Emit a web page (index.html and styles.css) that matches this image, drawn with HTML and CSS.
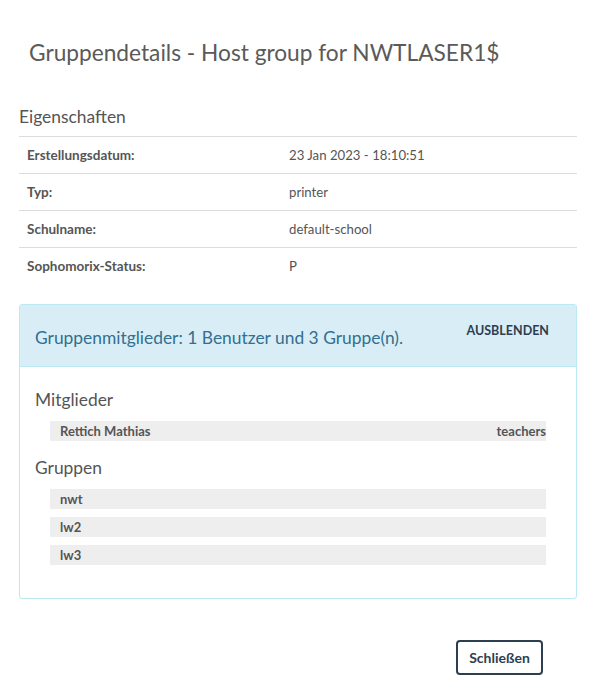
FILE: index.html
```html
<!doctype html>
<html>
<head>
<meta charset="utf-8">
<title>Gruppendetails</title>
<link rel="stylesheet" href="styles.css">
</head>
<body>
<div class="modal">
	<div class="modal-header">
		<h3 class="modal-title">Gruppendetails - Host group for NWTLASER1$</h3>
	</div>
	<div class="modal-body">
		<h4 class="section-title">Eigenschaften</h4>
		<table class="props">
			<tr><th>Erstellungsdatum:</th><td>23 Jan 2023 - 18:10:51</td></tr>
			<tr><th>Typ:</th><td>printer</td></tr>
			<tr><th>Schulname:</th><td>default-school</td></tr>
			<tr><th>Sophomorix-Status:</th><td>P</td></tr>
		</table>

		<div class="panel">
			<div class="panel-heading">
				<span class="panel-title">Gruppenmitglieder: 1 Benutzer und 3 Gruppe(n).</span>
				<a href="#" class="btn-flat">AUSBLENDEN</a>
			</div>
			<div class="panel-body">
				<h4 class="list-title">Mitglieder</h4>
				<ul class="item-list">
					<li><span>Rettich Mathias</span><span>teachers</span></li>
				</ul>
				<h4 class="list-title">Gruppen</h4>
				<ul class="item-list">
					<li><span>nwt</span></li>
					<li><span>lw2</span></li>
					<li><span>lw3</span></li>
				</ul>
			</div>
		</div>
	</div>
	<div class="modal-footer">
		<button class="btn">Schließen</button>
	</div>
</div>
</body>
</html>
```

FILE: styles.css
```css
html, body { margin: 0; padding: 0; background: #fff; }
body { font-family: Lato, "Liberation Sans", sans-serif; color: #555; font-size: 13px; }
h3, h4 { margin: 0; font-weight: normal; }
ul { list-style: none; margin: 0; padding: 0; }

.modal { width: 595px; }
.modal-header { padding: 38px 29px 0; }
.modal-title { font-size: 22.7px; line-height: 30px; color: #5a5a5a; }

.modal-body { padding: 37px 18px 0 19px; }
.section-title { font-size: 17.4px; line-height: 24px; padding-bottom: 7px; color: #555; }

.props { width: 100%; border-collapse: collapse; }
.props th, .props td { padding: 8px; line-height: 20px; border-top: 1px solid #ddd; text-align: left; vertical-align: top; }
.props th { width: 246px; font-weight: bold; font-size: 13.5px; }
.props td { font-size: 13.2px; }

.panel { margin-top: 20px; border: 1px solid #bce8f1; border-radius: 3px; }
.panel-heading { display: flex; justify-content: space-between; align-items: center; padding: 0 27px 0 15px; height: 61px; background: #d9edf7; border-bottom: 1px solid #bce8f1; }
.panel-title { font-size: 17.4px; color: #31708f; padding-top: 4px; }
.btn-flat { font-size: 12.5px; font-weight: bold; color: #2c3e50; text-decoration: none; margin-top: -10px; }

.panel-body { padding: 22px 15px 33px; }
.list-title { font-size: 17.4px; line-height: 22px; margin-bottom: 10px; }
.list-title + .item-list { margin-bottom: 16px; }
.item-list { margin: 0 15px; }
.item-list li { display: flex; justify-content: space-between; height: 20px; line-height: 20px; padding-left: 10px; margin-bottom: 8px; background: #eee; font-weight: bold; }
.item-list:last-child { margin-bottom: 0; }
.item-list:last-child li:last-child { margin-bottom: 0; }

.modal-footer { display: flex; justify-content: flex-end; padding: 41px 52px 20px; }
.btn { font-family: inherit; font-size: 14px; font-weight: bold; color: #2c3e50; background: #fff; border: 2px solid #2c3e50; border-radius: 4px; width: 87px; height: 35px; padding: 0; }
```
